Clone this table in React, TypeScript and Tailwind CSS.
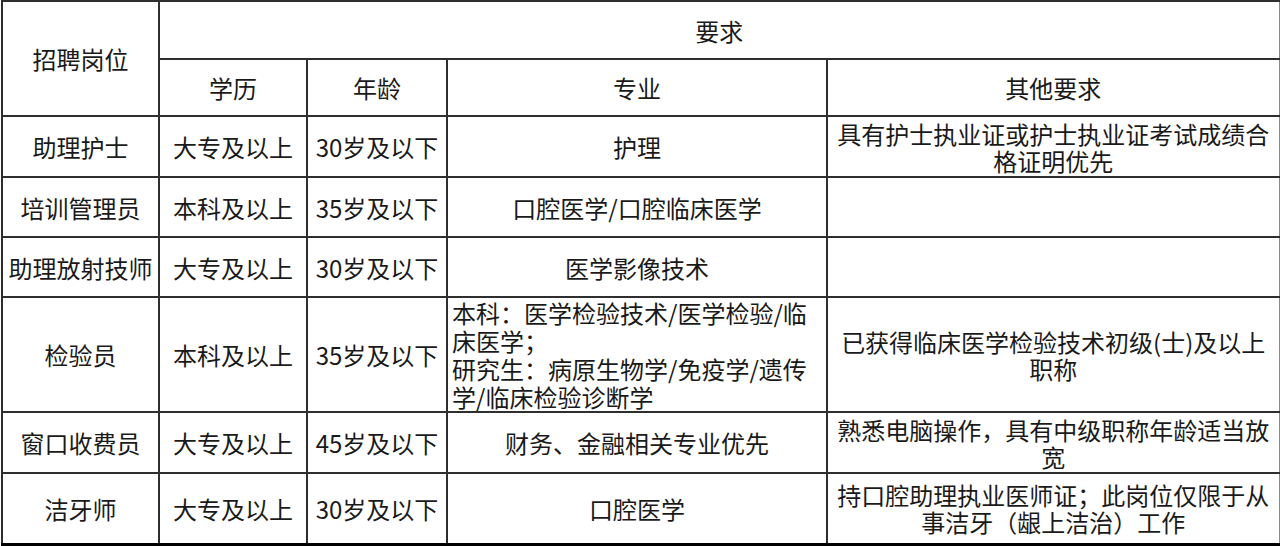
import React from 'react';

type Row = {
  post: string;
  edu: string;
  age: string;
  major: React.ReactNode;
  other: React.ReactNode;
  h: string;
  left?: boolean;
};

const rows: Row[] = [
  {
    post: '助理护士',
    edu: '大专及以上',
    age: '30岁及以下',
    major: '护理',
    other: (
      <>
        具有护士执业证或护士执业证考试成绩合
        <br />
        格证明优先
      </>
    ),
    h: 'h-[61px]',
  },
  { post: '培训管理员', edu: '本科及以上', age: '35岁及以下', major: '口腔医学/口腔临床医学', other: '', h: 'h-[60px]' },
  { post: '助理放射技师', edu: '大专及以上', age: '30岁及以下', major: '医学影像技术', other: '', h: 'h-[60px]' },
  {
    post: '检验员',
    edu: '本科及以上',
    age: '35岁及以下',
    major: (
      <>
        本科：医学检验技术/医学检验/临
        <br />
        床医学；
        <br />
        研究生：病原生物学/免疫学/遗传
        <br />
        学/临床检验诊断学
      </>
    ),
    other: (
      <>
        已获得临床医学检验技术初级(士)及以上
        <br />
        职称
      </>
    ),
    h: 'h-[115px]',
    left: true,
  },
  {
    post: '窗口收费员',
    edu: '大专及以上',
    age: '45岁及以下',
    major: '财务、金融相关专业优先',
    other: (
      <>
        熟悉电脑操作，具有中级职称年龄适当放
        <br />
        宽
      </>
    ),
    h: 'h-[61px]',
  },
  {
    post: '洁牙师',
    edu: '大专及以上',
    age: '30岁及以下',
    major: '口腔医学',
    other: (
      <>
        持口腔助理执业医师证；此岗位仅限于从
        <br />
        事洁牙（龈上洁治）工作
      </>
    ),
    h: 'h-[71px]',
  },
];

const cell = 'border-2 border-[#2e2e2e] text-center align-middle whitespace-nowrap p-0';

export default function App() {
  return (
    <div
      className="w-[1280px] h-[546px] bg-white pl-px text-[#1a1a1a] text-[24px] leading-[27px]"
      style={{ fontFamily: '"Noto Sans CJK SC", "Noto Sans", sans-serif' }}
    >
      <table className="table-fixed border-collapse w-[1277px]">
        <colgroup>
          <col className="w-[157px]" />
          <col className="w-[148px]" />
          <col className="w-[140px]" />
          <col className="w-[380px]" />
          <col className="w-[452px]" />
        </colgroup>
        <thead>
          <tr className="h-[58px]">
            <td rowSpan={2} className={cell}>
              招聘岗位
            </td>
            <td colSpan={4} className={`${cell} border-r border-r-[#8a8a8a]`}>
              要求
            </td>
          </tr>
          <tr className="h-[57px]">
            <td className={cell}>学历</td>
            <td className={cell}>年龄</td>
            <td className={cell}>专业</td>
            <td className={`${cell} border-r border-r-[#8a8a8a]`}>其他要求</td>
          </tr>
        </thead>
        <tbody>
          {rows.map((r, i) => (
            <tr key={r.post} className={`${r.h} ${i === rows.length - 1 ? 'border-b-[3px] border-b-black' : ''}`}>
              <td className={cell}>{r.post}</td>
              <td className={cell}>{r.edu}</td>
              <td className={cell}>{r.age}</td>
              <td className={`${cell} ${r.left ? 'text-left pl-[4px] leading-[28px]' : ''}`}>{r.major}</td>
              <td className={`${cell} border-r border-r-[#8a8a8a]`}>{r.other}</td>
            </tr>
          ))}
        </tbody>
      </table>
    </div>
  );
}
